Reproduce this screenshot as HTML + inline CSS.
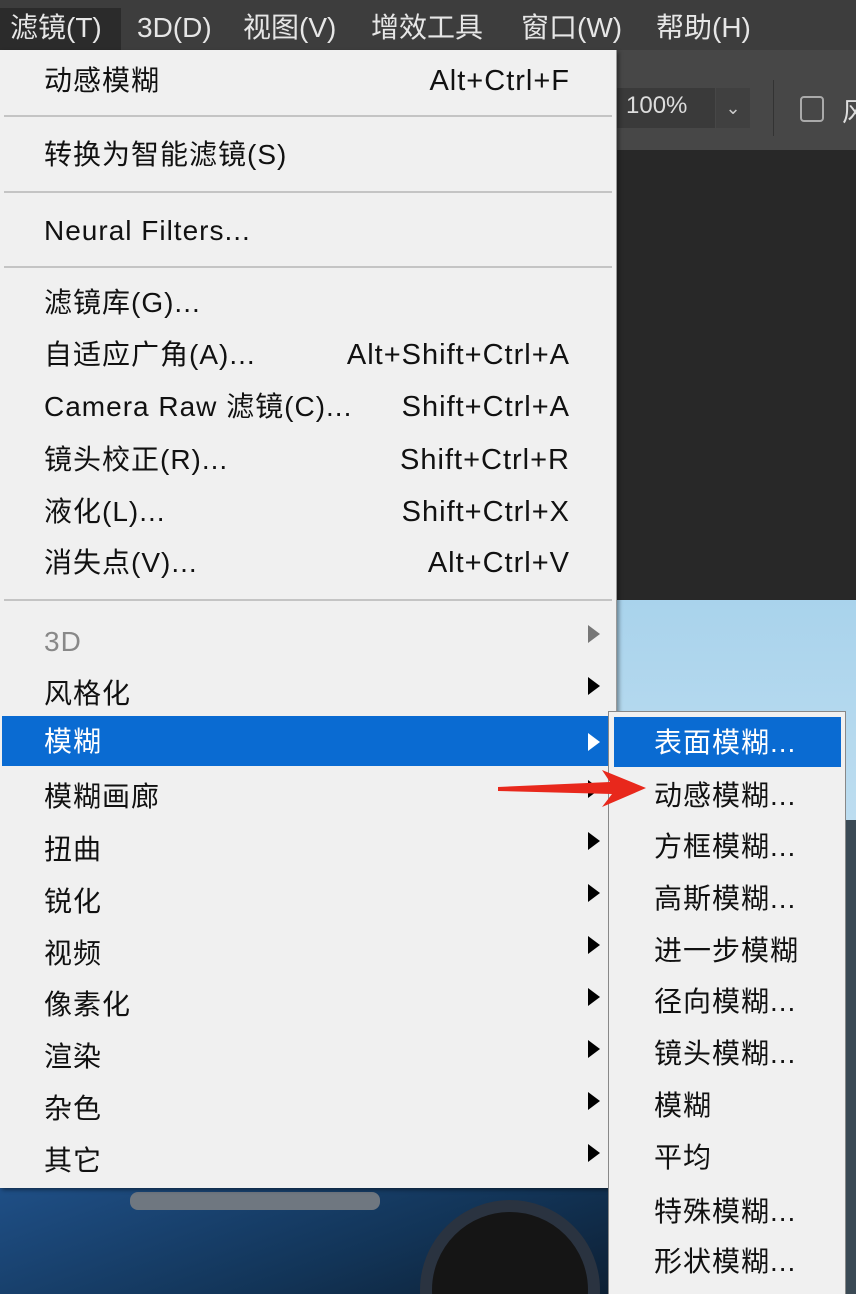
<!DOCTYPE html>
<html><head><meta charset="utf-8"><style>
*{margin:0;padding:0;box-sizing:border-box}
html,body{width:856px;height:1294px;overflow:hidden}
body{position:relative;background:#282828;font-family:"Liberation Sans","Noto Sans CJK SC",sans-serif}
.abs{position:absolute}
.mb{left:0;top:0;width:856px;height:50px;background:#3d3d3d}
.mb span{position:absolute;top:8px;font-size:28px;line-height:40px;color:#e6e6e6}
.menu{left:0;top:50px;width:617px;height:1138px;background:#f0f0f0;border-right:1px solid #999;box-shadow:2px 2px 4px rgba(0,0,0,.4)}
.it{position:absolute;left:44px;font-size:28px;letter-spacing:1px;color:#111;line-height:32px;white-space:nowrap}
.sc{position:absolute;right:46px;font-size:29px;letter-spacing:1px;color:#111;line-height:32px;white-space:nowrap}
.sep{position:absolute;left:4px;width:608px;height:2px;background:#c4c4c4}
.tri{position:absolute;left:588px;width:0;height:0;border-top:9px solid transparent;border-bottom:9px solid transparent;border-left:12px solid #000}
.sub{left:608px;top:711px;width:238px;height:583px;background:#f0f0f0;border:1px solid #888;border-bottom:none}
.si{position:absolute;left:45px;font-size:28px;letter-spacing:1px;color:#111;line-height:32px;white-space:nowrap}
</style></head><body>
<div class="abs" style="left:617px;top:50px;width:239px;height:100px;background:#474747"></div>
<div class="abs" style="left:617px;top:88px;width:98px;height:40px;background:#3a3a3a"></div>
<div class="abs" style="left:626px;top:92px;color:#ddd;font-size:24px">100%</div>
<div class="abs" style="left:716px;top:88px;width:34px;height:40px;background:#404040;color:#ccc;font-size:18px;text-align:center;line-height:40px">⌄</div>
<div class="abs" style="left:773px;top:80px;width:1px;height:56px;background:#333"></div>
<div class="abs" style="left:800px;top:96px;width:24px;height:26px;border:2px solid #aaa;border-radius:4px"></div>
<div class="abs" style="left:842px;top:92px;color:#ddd;font-size:26px">风</div>
<div class="abs" style="left:617px;top:600px;width:239px;height:694px;background:linear-gradient(#a9d3ec,#cfe6f3 60%,#d9e8f0)"></div>
<div class="abs" style="left:846px;top:820px;width:10px;height:474px;background:#3b4a55"></div>
<div class="abs" style="left:0;top:1188px;width:608px;height:106px;overflow:hidden;background:linear-gradient(160deg,#1f4f86,#123457 60%,#0d1f33)">
<div class="abs" style="left:420px;top:12px;width:180px;height:180px;border-radius:50%;background:#151515;border:12px solid #2a3340"></div>
<div class="abs" style="left:130px;top:4px;width:250px;height:18px;border-radius:8px;background:#6f7780"></div>
</div>

<div class="abs mb">
<div class="abs" style="left:0;top:8px;width:121px;height:42px;background:#2b2b2b"></div>
<span style="left:10px">滤镜(T)</span><span style="left:137px">3D(D)</span><span style="left:243px">视图(V)</span><span style="left:371px">增效工具</span><span style="left:521px">窗口(W)</span><span style="left:656px">帮助(H)</span>
</div>

<div class="abs menu">
<div class="it" style="top:15px">动感模糊</div><div class="sc" style="top:15px">Alt+Ctrl+F</div>
<div class="sep" style="top:65px"></div>
<div class="it" style="top:89px">转换为智能滤镜(S)</div>
<div class="sep" style="top:141px"></div>
<div class="it" style="top:165px">Neural Filters...</div>
<div class="sep" style="top:216px"></div>
<div class="it" style="top:237px">滤镜库(G)...</div>
<div class="it" style="top:289px">自适应广角(A)...</div><div class="sc" style="top:289px">Alt+Shift+Ctrl+A</div>
<div class="it" style="top:341px">Camera Raw 滤镜(C)...</div><div class="sc" style="top:341px">Shift+Ctrl+A</div>
<div class="it" style="top:394px">镜头校正(R)...</div><div class="sc" style="top:394px">Shift+Ctrl+R</div>
<div class="it" style="top:446px">液化(L)...</div><div class="sc" style="top:446px">Shift+Ctrl+X</div>
<div class="it" style="top:497px">消失点(V)...</div><div class="sc" style="top:497px">Alt+Ctrl+V</div>
<div class="sep" style="top:549px"></div>
<div class="it" style="top:576px;color:#888">3D</div><div class="tri" style="top:575px;border-left-color:#777"></div>
<div class="it" style="top:628px">风格化</div><div class="tri" style="top:627px"></div>
<div class="abs" style="left:2px;top:666px;width:606px;height:50px;background:#0a6bd2"></div>
<div class="it" style="top:676px;color:#fff">模糊</div><div class="tri" style="top:683px;border-left-color:#fff"></div>
<div class="it" style="top:731px">模糊画廊</div><div class="tri" style="top:730px"></div>
<div class="it" style="top:784px">扭曲</div><div class="tri" style="top:782px"></div>
<div class="it" style="top:836px">锐化</div><div class="tri" style="top:834px"></div>
<div class="it" style="top:888px">视频</div><div class="tri" style="top:886px"></div>
<div class="it" style="top:939px">像素化</div><div class="tri" style="top:938px"></div>
<div class="it" style="top:991px">渲染</div><div class="tri" style="top:990px"></div>
<div class="it" style="top:1043px">杂色</div><div class="tri" style="top:1042px"></div>
<div class="it" style="top:1095px">其它</div><div class="tri" style="top:1094px"></div>
</div>

<div class="abs sub">
<div class="abs" style="left:5px;top:5px;width:227px;height:50px;background:#0a6bd2"></div>
<div class="si" style="top:15px;color:#fff">表面模糊...</div>
<div class="si" style="top:68px">动感模糊...</div>
<div class="si" style="top:119px">方框模糊...</div>
<div class="si" style="top:171px">高斯模糊...</div>
<div class="si" style="top:223px">进一步模糊</div>
<div class="si" style="top:274px">径向模糊...</div>
<div class="si" style="top:326px">镜头模糊...</div>
<div class="si" style="top:378px">模糊</div>
<div class="si" style="top:430px">平均</div>
<div class="si" style="top:484px">特殊模糊...</div>
<div class="si" style="top:534px">形状模糊...</div>
</div>

<svg class="abs" style="left:490px;top:765px" width="160" height="50" viewBox="0 0 160 50">
<polygon points="8,22 120,17 112,5 156,23 112,42 122,29 8,26" fill="#e8281c"/>
</svg>
</body></html>
